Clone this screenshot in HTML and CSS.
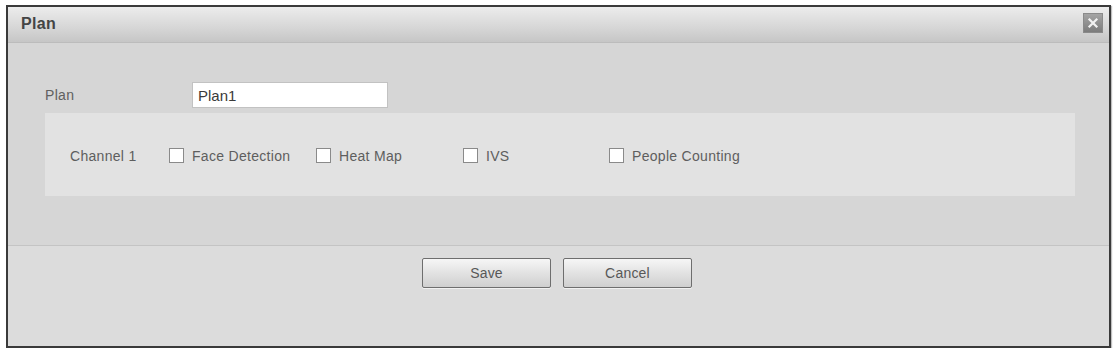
FILE: index.html
```html
<!DOCTYPE html>
<html>
<head>
<meta charset="utf-8">
<link rel="stylesheet" href="styles.css">
</head>
<body>
<div class="dialog">
  <div class="header">
    <span class="title">Plan</span>
    <span class="close" aria-label="Close">
      <svg width="12" height="12" viewBox="0 0 12 12"><path d="M2.5 2.5 L9.5 9.5 M9.5 2.5 L2.5 9.5" stroke="#f2f2f2" stroke-width="2.2" stroke-linecap="square"/></svg>
    </span>
  </div>
  <div class="body">
    <div class="name-row">
      <span class="label">Plan</span>
      <input class="text-input" type="text" value="Plan1">
    </div>
    <div class="panel">
      <div class="channel-row">
        <span class="channel">Channel 1</span>
        <label class="opt"><span class="box"></span><span>Face Detection</span></label>
        <label class="opt"><span class="box"></span><span>Heat Map</span></label>
        <label class="opt"><span class="box"></span><span>IVS</span></label>
        <label class="opt"><span class="box"></span><span>People Counting</span></label>
      </div>
    </div>
  </div>
  <div class="footer">
    <button class="btn">Save</button>
    <button class="btn">Cancel</button>
  </div>
</div>
</body>
</html>
```

FILE: styles.css
```css
html, body {
  margin: 0;
  padding: 0;
  background: #ffffff;
}
body {
  font-family: "Liberation Sans", Arial, sans-serif;
  font-size: 14px;
  color: #5e5e5e;
}
.dialog {
  box-sizing: border-box;
  width: 1105px;
  height: 343px;
  margin: 5px 0 0 6px;
  border: 2px solid #3a3a3a;
  background: #dcdcdc;
  display: flex;
  flex-direction: column;
  box-shadow: 1px 1px 1px rgba(0,0,0,0.25);
}
.header {
  box-sizing: border-box;
  height: 36px;
  flex: none;
  display: flex;
  align-items: center;
  justify-content: space-between;
  padding: 0 6px 0 13px;
  background: linear-gradient(#ececec, #d6d6d6 60%, #c6c6c6);
  border-bottom: 1px solid #bcbcbc;
}
.title {
  font-weight: bold;
  font-size: 16px;
  letter-spacing: 0.3px;
  color: #444444;
  margin-top: -1px;
}
.close {
  width: 20px;
  height: 20px;
  display: flex;
  align-items: center;
  justify-content: center;
  background: linear-gradient(#a4a4a4, #7c7c7c);
  border: 1px solid #8a8a8a;
  box-sizing: border-box;
  margin-top: -3px;
}
.body {
  flex: none;
  height: 203px;
  box-sizing: border-box;
  padding: 39px 34px 0 37px;
  background: #d6d6d6;
  border-bottom: 1px solid #c4c4c4;
}
.name-row {
  display: flex;
  align-items: center;
  height: 26px;
}
.label {
  width: 147px;
  letter-spacing: 0.3px;
  color: #606060;
}
.text-input {
  box-sizing: border-box;
  width: 196px;
  height: 26px;
  border: 1px solid #c2c2c2;
  background: #ffffff;
  font-family: "Liberation Sans", Arial, sans-serif;
  font-size: 15px;
  color: #3a3a3a;
  padding: 0 0 0 5px;
  margin: 0;
  outline: none;
}
.panel {
  margin-top: 5px;
  height: 83px;
  background: #e2e2e2;
  display: flex;
  align-items: center;
  padding-left: 25px;
}
.channel-row {
  display: grid;
  grid-template-columns: 99px 147px 147px 146px 200px;
  align-items: center;
  letter-spacing: 0.3px;
  margin-top: 2px;
}
.opt {
  display: flex;
  align-items: center;
  gap: 8px;
}
.box {
  box-sizing: border-box;
  width: 15px;
  height: 15px;
  background: #ffffff;
  border: 1px solid #8a8a8a;
}
.footer {
  flex: 1;
  display: flex;
  justify-content: center;
  align-items: flex-start;
  gap: 12px;
  padding-top: 12px;
  padding-right: 3px;
  background: #dcdcdc;
}
.btn {
  box-sizing: border-box;
  width: 129px;
  height: 30px;
  border: 1px solid #6e6e6e;
  border-radius: 2px;
  background: linear-gradient(#f6f6f6, #e2e2e2 50%, #cfcfcf);
  font-family: "Liberation Sans", Arial, sans-serif;
  font-size: 14px;
  color: #585858;
  letter-spacing: 0.2px;
  padding: 0;
  box-shadow: 0 1px 0 rgba(255,255,255,0.6);
}
```
